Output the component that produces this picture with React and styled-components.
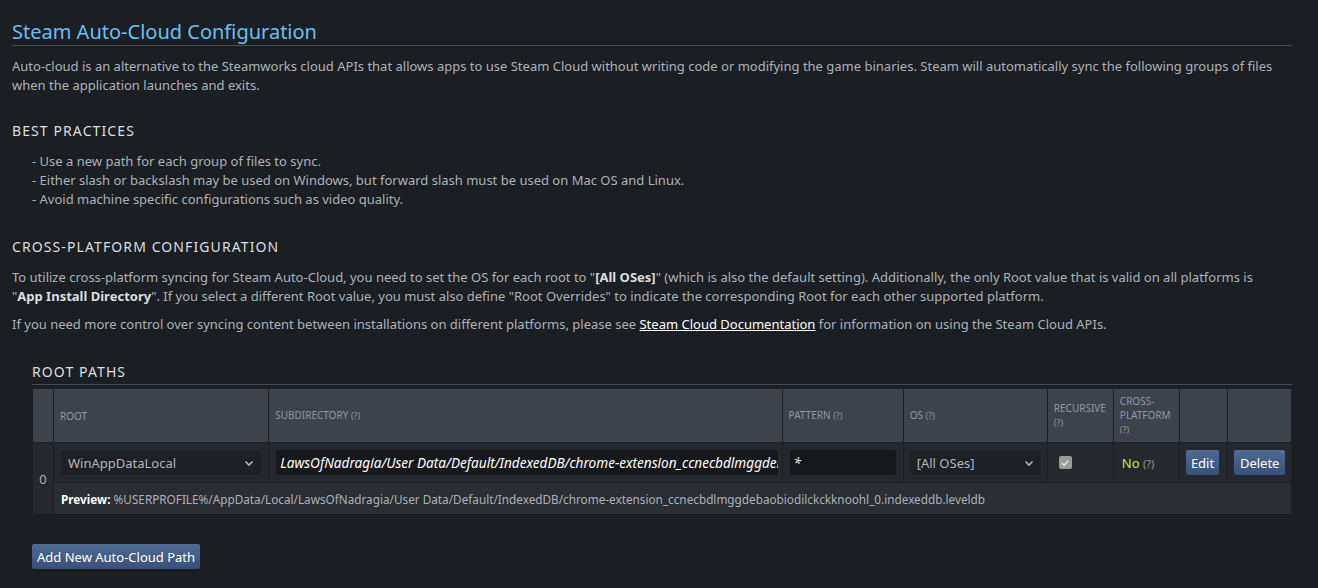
import React from "react"
import styled, { createGlobalStyle } from "styled-components"

const GlobalStyle = createGlobalStyle`
  html, body {
    margin: 0;
    padding: 0;
    background: #1b1e23;
  }
  body {
    font-family: "Noto Sans", "Open Sans", Arial, sans-serif;
    color: #acb2b8;
    font-size: 13px;
  }
`

const Page = styled.div`
  width: 1280px;
  padding: 18px 12px 18px 12px;
`

const Title = styled.h1`
  margin: 0;
  font-size: 20px;
  font-weight: 400;
  color: #66c0f4;
  line-height: 27px;
  border-bottom: 1px solid #474b52;
`

const Para = styled.p`
  margin: ${(p) => p.$margin || "11px 0 0 0"};
  line-height: 19px;
  font-size: 13px;
  b {
    color: #dcdedf;
  }
`

const NoWrap = styled.span`
  white-space: nowrap;
`

const SectionHead = styled.h2`
  margin: ${(p) => p.$margin || "26px 0 0 0"};
  font-size: 14px;
  font-weight: 400;
  letter-spacing: 1.1px;
  color: #dcdedf;
  text-transform: uppercase;
  line-height: 20px;
`

const BulletList = styled.ul`
  list-style: none;
  margin: 11px 0 0 0;
  padding: 0 0 0 20px;
  li {
    line-height: 19px;
  }
`

const DocLink = styled.a`
  color: #ffffff;
  text-decoration: underline;
`

const RootSection = styled.div`
  margin: 29px 0 0 20px;
`

const RootHead = styled.h3`
  margin: 0;
  font-size: 14px;
  font-weight: 400;
  letter-spacing: 1.1px;
  color: #dcdedf;
  line-height: 18px;
  padding-bottom: 3px;
  border-bottom: 1px solid #474b52;
`

const Table = styled.table`
  margin-top: 3px;
  width: 1260px;
  border-collapse: separate;
  border-spacing: 1px;
  background: #1b1e23;
  table-layout: fixed;
`

const HeadCell = styled.th`
  box-sizing: border-box;
  background: #3d434c;
  color: #8f98a0;
  font-size: 10px;
  font-weight: 400;
  text-align: left;
  text-transform: uppercase;
  padding: 0 4px 0 6px;
  height: 53px;
  line-height: 14px;
  width: ${(p) => p.$w}px;
  vertical-align: middle;
  small {
    font-size: 9px;
  }
`

const Cell = styled.td`
  box-sizing: border-box;
  background: #25282e;
  padding: 0 ${(p) => p.$pr ?? 7}px 0 ${(p) => p.$pl ?? 7}px;
  height: 39px;
  vertical-align: middle;
  font-size: 13px;
  overflow: hidden;
`

const IndexCell = styled.td`
  background: #25282e;
  color: #acb2b8;
  text-align: center;
  vertical-align: middle;
  padding: 0;
  font-size: 13px;
`

const PreviewCell = styled.td`
  background: #2a2d33;
  height: 31px;
  padding: 0 7px;
  font-size: 11.75px;
  color: #acb2b8;
  white-space: nowrap;
  b {
    color: #ffffff;
  }
`

const SelectBox = styled.div`
  display: flex;
  align-items: center;
  justify-content: space-between;
  height: 24px;
  padding: 0 6px 0 7px;
  border-radius: 3px;
  background: #1e2026;
  color: #b1b5ba;
  font-size: 13px;
`

const TextBox = styled.div`
  box-sizing: border-box;
  width: 100%;
  height: 25px;
  display: flex;
  align-items: center;
  padding: 0 4px;
  border-radius: 3px;
  background: #16181c;
  color: #ffffff;
  font-style: italic;
  font-size: 13.6px;
  white-space: nowrap;
  overflow: hidden;
`

const Check = styled.span`
  display: inline-flex;
  align-items: center;
  justify-content: center;
  width: 13px;
  height: 13px;
  border-radius: 2px;
  background: #9a9a9a;
`

const CrossValue = styled.span`
  color: #c8e34c;
  small {
    color: #8f98a0;
    font-size: 11px;
  }
`

const Button = styled.button`
  font-family: inherit;
  font-size: 13px;
  color: #ffffff;
  border: none;
  border-radius: 2px;
  height: 25px;
  padding: 0 ${(p) => p.$px || 5}px;
  background: linear-gradient(to bottom, #4e6c95 0%, #38507a 100%);
  cursor: pointer;
`

const Footer = styled.div`
  margin-top: 29px;
  padding-left: 20px;
`

const Chevron = () => (
  <svg width="12" height="12" viewBox="0 0 12 12">
    <path d="M2.5 4.5 L6 8 L9.5 4.5" fill="none" stroke="#b1b5ba" strokeWidth="1.6" />
  </svg>
)

const columns = [
  { w: 20, label: "" },
  { w: 214, label: "Root" },
  { w: 512, label: "Subdirectory", help: true },
  { w: 120, label: "Pattern", help: true },
  { w: 143, label: "OS", help: true },
  { w: 65, label: "Recursive", help: true },
  { w: 65, label: "Cross-Platform", help: true },
  { w: 47, label: "" },
  { w: 63, label: "" },
]

const subdir = "LawsOfNadragia/User Data/Default/IndexedDB/chrome-extension_ccnecbdlmggdebaobiodilckckknoohl_0.indexeddb.leveldb"

const App = () => {
  return (
    <>
      <GlobalStyle />
      <Page>
        <Title>Steam Auto-Cloud Configuration</Title>
        <Para>
          Auto-cloud is an alternative to the Steamworks cloud APIs that allows apps to use Steam Cloud without writing
          code or modifying the game binaries. Steam will automatically sync the following groups of files when the
          application launches and exits.
        </Para>

        <SectionHead>Best Practices</SectionHead>
        <BulletList>
          <li>- Use a new path for each group of files to sync.</li>
          <li>- Either slash or backslash may be used on Windows, but forward slash must be used on Mac OS and Linux.</li>
          <li>- Avoid machine specific configurations such as video quality.</li>
        </BulletList>

        <SectionHead $margin="28px 0 0 0">Cross-Platform Configuration</SectionHead>
        <Para>
          To utilize cross-platform syncing for Steam Auto-Cloud, you need to set the OS for each root to "
          <b>[All OSes]</b>" (which is also the default setting). Additionally, the only Root value that is valid on
          all platforms is{" "}
          <NoWrap>
            "<b>App Install Directory</b>".
          </NoWrap>{" "}
          If you select a different Root value, you must also define "Root Overrides" to indicate the corresponding
          Root for each other supported platform.
        </Para>
        <Para $margin="9px 0 0 0">
          If you need more control over syncing content between installations on different platforms, please see{" "}
          <DocLink>Steam Cloud Documentation</DocLink> for information on using the Steam Cloud APIs.
        </Para>

        <RootSection>
          <RootHead>ROOT PATHS</RootHead>
          <Table>
            <thead>
              <tr>
                {columns.map((c, i) => (
                  <HeadCell key={i} $w={c.w}>
                    {c.label} {c.help && <small>(?)</small>}
                  </HeadCell>
                ))}
              </tr>
            </thead>
            <tbody>
              <tr>
                <IndexCell rowSpan={2}>0</IndexCell>
                <Cell>
                  <SelectBox>
                    WinAppDataLocal
                    <Chevron />
                  </SelectBox>
                </Cell>
                <Cell $pr={4}>
                  <TextBox>{subdir}</TextBox>
                </Cell>
                <Cell>
                  <TextBox>*</TextBox>
                </Cell>
                <Cell $pl={6} $pr={6}>
                  <SelectBox>
                    [All OSes]
                    <Chevron />
                  </SelectBox>
                </Cell>
                <Cell $pl={11}>
                  <Check>
                    <svg width="10" height="10" viewBox="0 0 10 10">
                      <path d="M1.8 5.2 L4 7.3 L8.3 2.6" fill="none" stroke="#dcdcdc" strokeWidth="1.8" />
                    </svg>
                  </Check>
                </Cell>
                <Cell $pl={8} $pr={0}>
                  <CrossValue>
                    No <small>(?)</small>
                  </CrossValue>
                </Cell>
                <Cell $pl={6} $pr={0}>
                  <Button>Edit</Button>
                </Cell>
                <Cell $pl={6} $pr={0}>
                  <Button $px={6}>Delete</Button>
                </Cell>
              </tr>
              <tr>
                <PreviewCell colSpan={8}>
                  <b>Preview:</b> %USERPROFILE%/AppData/Local/{subdir}
                </PreviewCell>
              </tr>
            </tbody>
          </Table>
        </RootSection>

        <Footer>
          <Button $px={5}>Add New Auto-Cloud Path</Button>
        </Footer>
      </Page>
    </>
  )
}

export default App
